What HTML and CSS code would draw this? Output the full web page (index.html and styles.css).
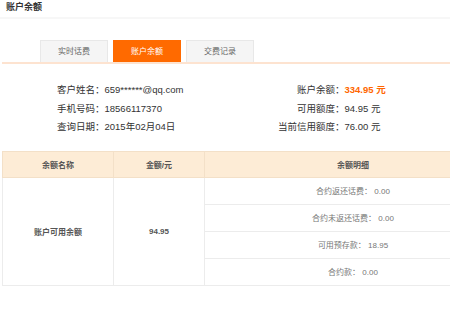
FILE: index.html
```html
<!DOCTYPE html>
<html lang="zh-CN">
<head>
    <meta charset="UTF-8">
    <meta name="viewport" content="width=device-width, initial-scale=1.0">
    <title>账户余额</title>
    <link rel="stylesheet" href="styles.css">
</head>
<body>
    <div class="page">
        <div class="title-bar">账户余额</div>

        <div class="tabs">
            <div class="tab">实时话费</div>
            <div class="tab active">账户余额</div>
            <div class="tab">交费记录</div>
        </div>

        <div class="info">
            <span class="label">客户姓名：</span>
            <span class="value">659******@qq.com</span>
            <span class="label right">账户余额：</span>
            <span class="value money">334.95 元</span>

            <span class="label">手机号码：</span>
            <span class="value">18566117370</span>
            <span class="label right">可用额度：</span>
            <span class="value">94.95 元</span>

            <span class="label">查询日期：</span>
            <span class="value">2015年02月04日</span>
            <span class="label right">当前信用额度：</span>
            <span class="value">76.00 元</span>
        </div>

        <table class="balance">
            <tr>
                <th class="col-name">余额名称</th>
                <th class="col-amount">金额/元</th>
                <th>余额明细</th>
            </tr>
            <tr>
                <td class="strong" rowspan="4">账户可用余额</td>
                <td class="strong" rowspan="4">94.95</td>
                <td class="detail">合约返还话费： 0.00</td>
            </tr>
            <tr>
                <td class="detail">合约未返还话费： 0.00</td>
            </tr>
            <tr>
                <td class="detail">可用预存款： 18.95</td>
            </tr>
            <tr>
                <td class="detail">合约款： 0.00</td>
            </tr>
        </table>
    </div>
</body>
</html>
```

FILE: styles.css
```css
html, body{
    margin: 0;
    overflow: hidden;
}

body{
    font-family: "Liberation Sans", "Noto Sans CJK SC", sans-serif;
    background-color: #fff;
    color: #333;
}

.page{
    width: 450px;
    height: 309px;
    overflow: hidden;
}

.title-bar{
    height: 19px;
    box-sizing: border-box;
    padding-left: 6px;
    font-size: 9px;
    font-weight: bold;
    line-height: 15px;
    border-bottom: 2px solid #f7f7f7;
}

.tabs{
    display: flex;
    gap: 5px;
    margin: 21px 0 0 2px;
    padding-left: 38px;
    border-bottom: 2px solid #fde3d0;
}

.tab{
    width: 68px;
    height: 22px;
    box-sizing: border-box;
    background-color: #f5f5f5;
    border: 1px solid #e8e8e8;
    border-bottom: none;
    color: #666;
    font-size: 8px;
    line-height: 21px;
    text-align: center;
}

.tab.active{
    background-color: #ff6a00;
    border-color: #ff6a00;
    color: #fff;
}

.info{
    display: grid;
    grid-template-columns: max-content 140px 100px auto;
    grid-auto-rows: 18.5px;
    padding: 17px 0 0 57px;
    font-size: 9.5px;
    line-height: 18.5px;
    white-space: nowrap;
}

.label.right{
    text-align: right;
}

.money{
    color: #ff6600;
    font-weight: bold;
}

.balance{
    margin: 14px 0 0 2px;
    width: 500px;
    border-collapse: collapse;
    font-size: 8px;
    text-align: center;
}

.balance th{
    height: 25px;
    padding: 0;
    background-color: #fdecd6;
    border: 1px solid #f3e0c8;
    color: #555;
    font-weight: bold;
}

.balance td{
    height: 26px;
    padding: 0;
    border: 1px solid #ececec;
}

.col-name{
    width: 110px;
}

.col-amount{
    width: 90px;
}

.strong{
    color: #555;
    font-weight: bold;
}

.detail{
    color: #777;
}
```
